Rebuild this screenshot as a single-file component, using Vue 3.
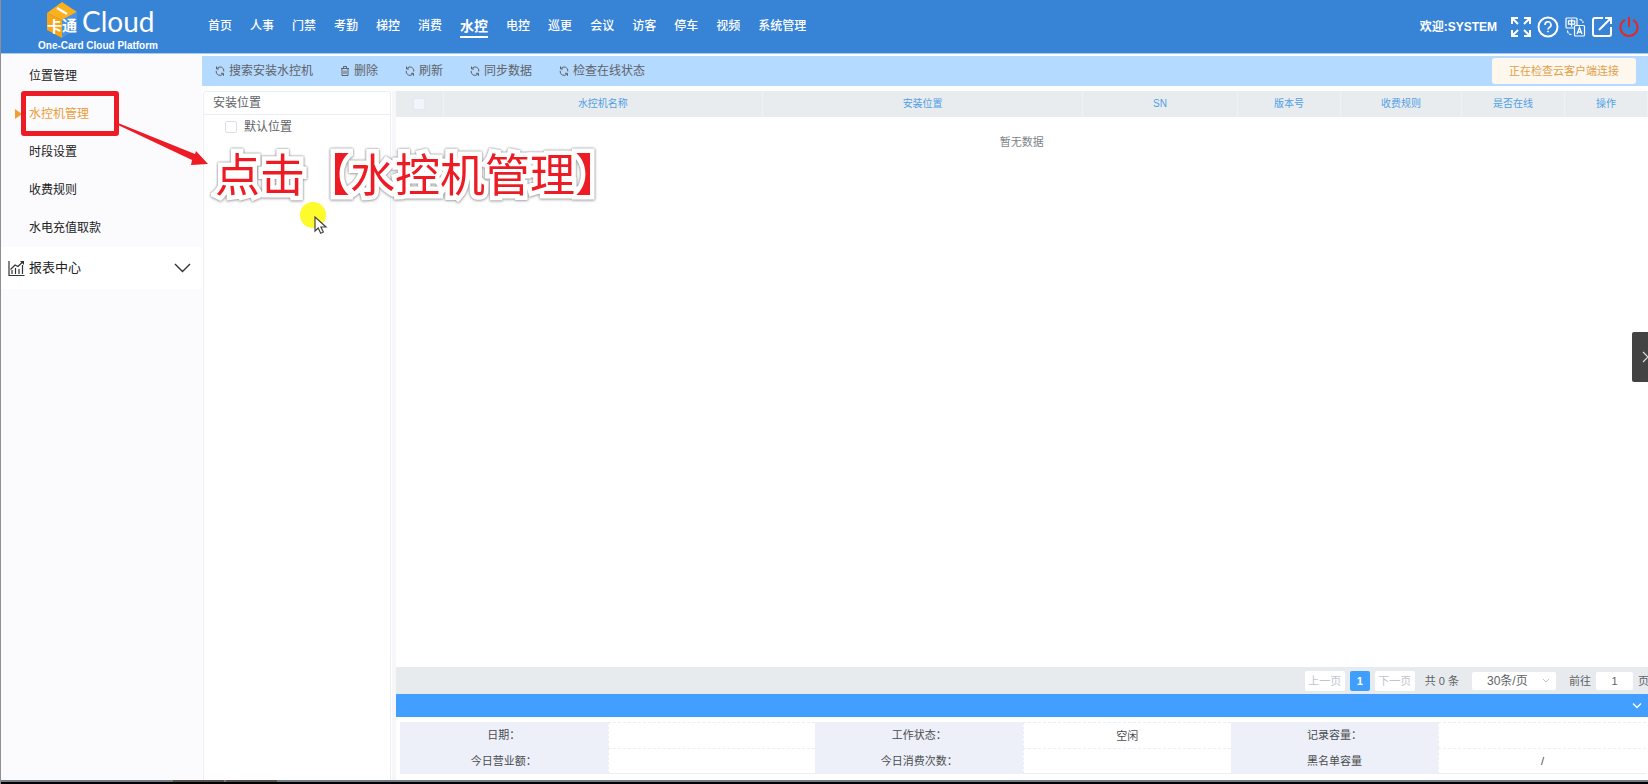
<script setup>
import { ref } from 'vue'

const nav = ['首页', '人事', '门禁', '考勤', '梯控', '消费', '水控', '电控', '巡更', '会议', '访客', '停车', '视频', '系统管理']
const activeNav = '水控'

const menu = ['位置管理', '水控机管理', '时段设置', '收费规则', '水电充值取款']
const activeMenu = '水控机管理'

const tools = [
  { label: '搜索安装水控机', icon: 'sync' },
  { label: '删除', icon: 'trash' },
  { label: '刷新', icon: 'sync' },
  { label: '同步数据', icon: 'sync' },
  { label: '检查在线状态', icon: 'sync' },
]

const columns = [
  { label: '水控机名称', cls: 'c-auto' },
  { label: '安装位置', cls: 'c-auto' },
  { label: 'SN', cls: 'c-sn' },
  { label: '版本号', cls: 'c-mid' },
  { label: '收费规则', cls: 'c-rule' },
  { label: '是否在线', cls: 'c-mid' },
  { label: '操作', cls: 'c-act' },
]

const statusRows = [
  [['日期：', ''], ['工作状态：', '空闲'], ['记录容量：', '']],
  [['今日营业额：', ''], ['今日消费次数：', ''], ['黑名单容量', '/']],
]

const page = ref('1')
const pageSize = ref('30')
</script>

<template>
  <div class="app">
    <header class="header">
      <div class="brand">
        <div class="logo">
          <svg class="cube" width="32" height="38" viewBox="0 0 32 38" aria-hidden="true">
            <path d="M16 1 31 11 16 19 1 12Z" fill="#fbb01c" />
            <path d="M1 12 16 19V37L1 29Z" fill="#f9a414" />
            <path d="M16 19 31 11V28L16 37Z" fill="#4a93e0" />
            <path d="M11 7 21 13" stroke="#fff" stroke-width="2.4" />
            <text x="1" y="31" font-size="15" font-weight="700" fill="#fff">卡</text>
            <text x="16" y="30" font-size="15" font-weight="700" fill="#fff">通</text>
          </svg>
          <span class="logo-name">Cloud</span>
        </div>
        <div class="slogan">One-Card Cloud Platform</div>
      </div>
      <nav class="nav">
        <a v-for="n in nav" :key="n" href="#" :class="{ active: n === activeNav }">{{ n }}</a>
      </nav>
      <div class="user">
        <span class="welcome">欢迎:SYSTEM</span>
        <button type="button" aria-label="全屏">
          <svg width="22" height="22" viewBox="0 0 22 22" fill="none" stroke="#fff" stroke-width="2">
            <path d="M2 8V2h6M2 2l6 6M14 2h6v6M20 2l-6 6M2 14v6h6M2 20l6-6M20 14v6h-6M20 20l-6-6" />
          </svg>
        </button>
        <button type="button" aria-label="帮助">
          <svg width="22" height="22" viewBox="0 0 22 22" fill="none" stroke="#fff">
            <circle cx="11" cy="11" r="9.5" stroke-width="2" />
            <path d="M8 9a3 3 0 1 1 4.5 2.4c-1 .6-1.500 1-1.500 2.200" stroke-width="1.600" />
            <circle cx="11" cy="15.500" r=".6" stroke-width="1" />
          </svg>
        </button>
        <button type="button" aria-label="语言">
          <svg width="22" height="22" viewBox="0 0 22 22" fill="none" stroke="#fff" stroke-width="1.200">
            <path d="M10 12H3a1 1 0 0 1-1-1V3a1 1 0 0 1 1-1h9a1 1 0 0 1 1 1v6" />
            <path d="M4.500 4.800h6.200v3.400H4.500zM7.600 3.200v7.600" stroke-width="1.300" />
            <rect x="10.500" y="9.500" width="10" height="10.500" rx="1" />
            <path d="m13 18 2.500-6.500L18 18M13.800 16h3.400" stroke-width="1.300" />
            <path d="M15.500 3.500c2 0 3.500 1 3.500 3.500M3.500 14.500c0 2.500 1.500 4 4 4" stroke-dasharray="3 1" />
          </svg>
        </button>
        <button type="button" aria-label="编辑">
          <svg width="22" height="22" viewBox="0 0 22 22" fill="none" stroke="#fff" stroke-width="2">
            <path d="M12 2H4a2 2 0 0 0-2 2v14a2 2 0 0 0 2 2h14a2 2 0 0 0 2-2v-7M8 14 19 3M14 2h6v6" />
          </svg>
        </button>
        <button type="button" aria-label="退出">
          <svg width="22" height="22" viewBox="0 0 22 22" fill="none" stroke="#e02a24" stroke-width="2">
            <path d="M7 3.800a8.600 8.600 0 1 0 8 0M11 1v10" />
          </svg>
        </button>
      </div>
    </header>

    <div class="body">
      <aside class="sidebar">
        <a v-for="m in menu" :key="m" href="#" class="menu-item" :class="{ active: m === activeMenu }">{{ m }}</a>
        <button type="button" class="menu-group">
          <svg width="17" height="17" viewBox="0 0 17 17" fill="none" stroke="#333" stroke-width="1.200">
            <path d="M1 1v14.500h15.500M4 14v-4M7.500 14V8M11 14V9M14.500 14V5M2.500 9.500 7 5l3 1.500 5-5" />
            <path d="M12 1h4v4z" fill="#333" stroke="none" />
          </svg>
          <span>报表中心</span>
          <svg class="caret" width="17" height="10" viewBox="0 0 17 10" fill="none" stroke="#333" stroke-width="1.400">
            <path d="m1 1 7.500 7.500L16 1" />
          </svg>
        </button>
      </aside>

      <main class="main">
        <div class="toolbar">
          <button v-for="t in tools" :key="t.label" type="button" class="tool">
            <svg v-if="t.icon === 'sync'" width="12" height="12" viewBox="0 0 12 12" fill="none" stroke="#606266">
              <path d="M3 3.500a3.800 3.800 0 0 1 6.800 3M9 8.800a3.800 3.800 0 0 1-6.800-3M2.500 1.500v2.500H5M9.500 10.800V8.300H7" />
            </svg>
            <svg v-else width="12" height="12" viewBox="0 0 12 12" fill="none" stroke="#606266">
              <path d="M2 3.500h8M4.500 3.500v-2h3v2M3 3.500v7h6v-7M5 5.500v3.500M7 5.500v3.500" />
            </svg>
            <span>{{ t.label }}</span>
          </button>
          <button type="button" class="warn">正在检查云客户端连接</button>
        </div>

        <div class="panes">
          <section class="tree">
            <h2>安装位置</h2>
            <label><input type="checkbox" /><span>默认位置</span></label>
          </section>

          <section class="content">
            <table class="grid">
              <thead>
                <tr>
                  <th class="c-check"><input type="checkbox" aria-label="全选" /></th>
                  <th v-for="c in columns" :key="c.label" :class="c.cls">{{ c.label }}</th>
                </tr>
              </thead>
              <tbody>
                <tr><td colspan="8">暂无数据</td></tr>
              </tbody>
            </table>

            <div class="pager">
              <button type="button" class="pg" disabled>上一页</button>
              <button type="button" class="pg current">1</button>
              <button type="button" class="pg" disabled>下一页</button>
              <span class="total">共 0 条</span>
              <span class="size">
                <select v-model="pageSize" aria-label="每页条数">
                  <option value="30">30条/页</option>
                </select>
                <svg width="8" height="6" viewBox="0 0 8 6" fill="none" stroke="#c0c4cc"><path d="m1 1 3 3 3-3" /></svg>
              </span>
              <label class="jump">前往<input v-model="page" type="text" /><span>页</span></label>
            </div>

            <div class="fold">
              <button type="button" aria-label="收起">
                <svg width="10" height="8" viewBox="0 0 10 8" fill="none" stroke="#fff" stroke-width="1.300"><path d="m1 1.500 4 4 4-4" /></svg>
              </button>
            </div>

            <div class="status-wrap">
              <table class="status">
                <tbody>
                  <tr v-for="(row, i) in statusRows" :key="i">
                    <template v-for="cell in row" :key="cell[0]">
                      <th scope="row">{{ cell[0] }}</th>
                      <td>{{ cell[1] }}</td>
                    </template>
                  </tr>
                </tbody>
              </table>
            </div>
          </section>
        </div>
      </main>
    </div>

    <footer class="taskbar"><i></i><i></i></footer>

    <button type="button" class="drawer" aria-label="展开">
      <svg width="6" height="12" viewBox="0 0 6 12" fill="none" stroke="#ddd" stroke-width="1.200"><path d="m1 1 5 5-5 5" /></svg>
    </button>

    <div class="mark-box"></div>
    <svg class="mark-arrow" width="92" height="46" viewBox="0 0 92 46" aria-hidden="true">
      <path d="M1 3 78 34 79 31 91 44 74 45 75 40 1 5Z" fill="#ed1c24" />
    </svg>
    <div class="mark-text">点击【水控机管理】</div>
    <div class="spot"></div>
    <svg class="cursor" width="14" height="19" viewBox="0 0 14 19" aria-hidden="true">
      <path d="M1 1v14l3.200-3 2.500 5.200 2.600-1.200-2.400-5H12Z" fill="#fff" stroke="#444" stroke-width="1.200" />
    </svg>
  </div>
</template>

<style>
body {
  margin: 0;
  overflow: hidden;
}
</style>

<style scoped>
.app {
  position: relative;
  display: flex;
  flex-direction: column;
  min-height: 100vh;
  box-sizing: border-box;
  border-left: 1px solid #8f8f93;
  background: #fff;
  color: #606266;
  font: 12px/16px "Liberation Sans", "Noto Sans CJK SC", sans-serif;
}
.app * {
  box-sizing: border-box;
}
button {
  padding: 0;
  border: 0;
  background: none;
  color: inherit;
  font: inherit;
  cursor: pointer;
}
a {
  color: inherit;
  text-decoration: none;
}
svg {
  display: block;
  flex: none;
}
input[type="checkbox"] {
  appearance: none;
  width: 12px;
  height: 12px;
  margin: 0;
  border: 1px solid #dcdfe6;
  border-radius: 2px;
  background: #fff;
}

/* header */
.header {
  display: flex;
  height: 54px;
  border-bottom: 1px solid #a9cbf0;
  background: #3783d6;
  color: #fff;
}
.brand {
  width: 198px;
  padding: 1px 0 0 37px;
}
.logo {
  display: flex;
  height: 38px;
  padding-left: 8px;
}
.cube text {
  font-family: "Noto Sans CJK SC", sans-serif;
}
.logo-name {
  margin-left: 4px;
  font: 28px/40px Lato, sans-serif;
}
.slogan {
  font-size: 10px;
  font-weight: 700;
  line-height: 14px;
  white-space: nowrap;
}
.nav {
  display: flex;
  flex: 1;
  align-items: flex-start;
  gap: 18px;
  padding: 14px 0 0 9px;
  font-weight: 500;
}
.nav a {
  height: 24px;
  line-height: 24px;
  white-space: nowrap;
}
.nav a.active {
  border-bottom: 2px solid #fff;
  font-size: 14px;
  font-weight: 700;
}
.user {
  display: flex;
  align-items: center;
  gap: 5px;
  padding-right: 8px;
}
.welcome {
  margin-right: 8px;
  font-weight: 700;
}

/* layout */
.body {
  display: flex;
  flex: 1;
}
.sidebar {
  flex: none;
  width: 201px;
  padding-top: 3px;
  background: #fbfbfe;
}
.menu-item {
  position: relative;
  display: block;
  height: 38px;
  padding-left: 28px;
  color: #222;
  line-height: 38px;
}
.menu-item.active {
  color: #eb9c35;
}
.menu-item.active::before {
  content: "";
  position: absolute;
  top: 14px;
  left: 14px;
  border: 5px solid transparent;
  border-left: 7px solid #f0a030;
}
.menu-group {
  display: flex;
  align-items: center;
  width: 100%;
  height: 42px;
  padding: 0 11px 0 7px;
  background: #fff;
  color: #222;
  font-size: 13px;
}
.menu-group span {
  margin-left: 4px;
}
.caret {
  margin-left: auto;
}
.main {
  display: flex;
  flex: 1;
  flex-direction: column;
  min-width: 0;
  padding-top: 2px;
}
.toolbar {
  display: flex;
  align-items: center;
  gap: 26px;
  height: 30px;
  padding: 0 12px 0 12px;
  background: #b5daff;
}
.tool {
  display: flex;
  align-items: center;
  gap: 3px;
  white-space: nowrap;
}
.warn {
  height: 26px;
  margin-left: auto;
  padding: 0 17px;
  border-radius: 3px;
  background: #fdf7ee;
  color: #e0a04a;
  font-size: 11px;
}
.panes {
  display: flex;
  flex: 1;
  margin-top: 5px;
}
.tree {
  flex: none;
  width: 188px;
  margin-left: 1px;
  border: 1px solid #ebeef5;
  border-bottom: 0;
  border-radius: 3px 3px 0 0;
}
.tree h2 {
  margin: 0;
  padding: 0 9px;
  border-bottom: 1px solid #ebeef5;
  font-size: 12px;
  font-weight: 400;
  line-height: 22px;
}
.tree label {
  display: flex;
  align-items: center;
  gap: 7px;
  height: 24px;
  padding-left: 21px;
}
.content {
  display: flex;
  flex: 1;
  flex-direction: column;
  min-width: 0;
  margin-left: 1px;
  border-left: 4px solid #f7f7f9;
}

/* device grid */
.grid {
  width: 100%;
  border-collapse: collapse;
  table-layout: fixed;
}
.grid th {
  height: 26px;
  padding: 0;
  border-right: 1px solid #eef1f5;
  background: #e9ecef;
  color: #4f9fe6;
  font-size: 10px;
  font-weight: 400;
}
.grid th input {
  display: block;
  margin: 0 auto;
  border-color: #e4e8f0;
  background: #f2f5fc;
}
.grid td {
  height: 50px;
  padding: 0;
  color: #808388;
  font-size: 11px;
  text-align: center;
}
.c-check { width: 47px; }
.c-sn { width: 155px; }
.c-mid { width: 103px; }
.c-rule { width: 121px; }
.c-act { width: 83px; }

/* pagination */
.pager {
  display: flex;
  align-items: center;
  justify-content: flex-end;
  height: 27px;
  margin-top: auto;
  background: #e8ebee;
  font-size: 11px;
  white-space: nowrap;
}
.pg {
  width: 40px;
  height: 20px;
  margin-right: 5px;
  border-radius: 2px;
  background: #fff;
}
.pg:disabled {
  color: #c0c4cc;
}
.pg.current {
  width: 20px;
  background: #409eff;
  color: #fff;
  font-weight: 700;
}
.total {
  margin: 0 13px 0 5px;
}
.size {
  display: flex;
  align-items: center;
  width: 84px;
  height: 18px;
  padding-right: 6px;
  border-radius: 2px;
  background: #fff;
}
.size select {
  flex: 1;
  appearance: none;
  padding: 0 0 0 15px;
  border: 0;
  background: none;
  color: #606266;
  font: inherit;
  font-size: 12px;
}
.jump {
  display: flex;
  align-items: center;
  gap: 5px;
  margin-left: 13px;
}
.jump input {
  width: 37px;
  height: 18px;
  padding: 0;
  border: 0;
  border-radius: 2px;
  background: #fff;
  color: #606266;
  font: inherit;
  text-align: center;
}
.jump span {
  width: 10px;
  overflow: hidden;
}

/* status panel */
.fold {
  display: flex;
  align-items: center;
  justify-content: flex-end;
  height: 23px;
  padding-right: 6px;
  background: #439fff;
}
.status-wrap {
  padding: 5px 2px 6px 4px;
}
.status {
  width: 100%;
  border-spacing: 0;
  table-layout: fixed;
  color: #4a4c50;
  font-size: 11px;
  text-align: center;
}
.status th,
.status td {
  height: 26px;
  padding: 0;
  font-weight: 400;
}
.status th {
  background: #edf0f8;
}
.status td {
  border: 1px dashed #ebeef5;
  border-width: 1px 0 0 1px;
}
.status tr:last-child td {
  border-bottom: 1px solid #ebeef5;
}
.taskbar {
  display: flex;
  gap: 2px;
  height: 4px;
  padding-left: 172px;
  border-bottom: 2px solid #000;
  background: #6f7a8a;
}
.taskbar i {
  width: 51px;
  background: #564f4e;
}

/* overlays */
.drawer {
  position: absolute;
  top: 332px;
  right: 0;
  display: flex;
  align-items: center;
  justify-content: flex-end;
  width: 16px;
  height: 50px;
  border-radius: 2px 0 0 2px;
  background: #434343;
}
.mark-box {
  position: absolute;
  top: 91px;
  left: 20px;
  width: 98px;
  height: 45px;
  border: 5px solid #ed1c24;
  border-radius: 3px;
}
.mark-arrow {
  position: absolute;
  top: 120px;
  left: 116px;
}
.mark-text {
  position: absolute;
  top: 143px;
  left: 214px;
  color: #ed1c24;
  font: 45px/60px "Noto Sans CJK SC", sans-serif;
  white-space: nowrap;
  -webkit-text-stroke: 9px #fff;
  paint-order: stroke fill;
  stroke-linejoin: round;
  filter: drop-shadow(0 0 1px #888) drop-shadow(0 1px 1px #ccc);
}
.spot {
  position: absolute;
  top: 202px;
  left: 299px;
  width: 26px;
  height: 26px;
  border-radius: 50%;
  background: #fdfb2c;
}
.cursor {
  position: absolute;
  top: 216px;
  left: 313px;
}
</style>
